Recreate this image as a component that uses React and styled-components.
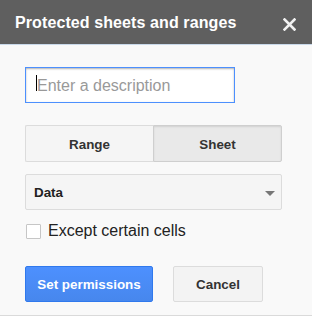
import React from "react";
import styled, { createGlobalStyle } from "styled-components";

const Global = createGlobalStyle`
  html, body { margin: 0; padding: 0; }
  body { background: #f9f9f9; font-family: "Liberation Sans", Arial, sans-serif; }
`;

const Dialog = styled.div`
  width: 312px;
  height: 316px;
  box-sizing: border-box;
  background: #f9f9f9;
  border-bottom: 1px solid #dadada;
  display: flex;
  flex-direction: column;
`;

const Header = styled.div`
  height: 44px;
  background: #5f5f5f;
  border-bottom: 1px solid #c9d9ea;
  display: flex;
  align-items: center;
  justify-content: space-between;
  padding: 0 15px 0 15px;
  color: #fff;
`;

const Title = styled.div`
  font-weight: bold;
  font-size: 16px;
  letter-spacing: 0.1px;
  margin-top: 1px;
`;

const Close = styled.div`
  width: 14px;
  height: 14px;
  display: flex;
  align-items: center;
  justify-content: center;
  margin-top: 5px;
  margin-right: 1px;
`;

const Body = styled.div`
  padding: 22px 30px 0 25px;
  display: flex;
  flex-direction: column;
`;

const InputWrap = styled.div`
  position: relative;
  width: 210px;
  height: 36px;
`;

const Input = styled.input`
  width: 210px;
  height: 36px;
  box-sizing: border-box;
  border: 1px solid #4d90fe;
  box-shadow: inset 0 1px 2px rgba(0, 0, 0, 0.3);
  background: #fff;
  font-family: "Liberation Sans", Arial, sans-serif;
  font-size: 16px;
  padding: 2px 10px 0 11px;
  outline: none;
  caret-color: transparent;
  &::placeholder { color: #999; }
`;

const Caret = styled.span`
  position: absolute;
  left: 11px;
  top: 8px;
  width: 1px;
  height: 16px;
  background: #000;
  pointer-events: none;
`;

const Segmented = styled.div`
  margin-top: 22px;
  display: grid;
  grid-template-columns: 128px 129px;
  width: 257px;
  height: 37px;
`;

const Seg = styled.div`
  box-sizing: border-box;
  display: flex;
  align-items: center;
  justify-content: center;
  font-weight: bold;
  font-size: 13.4px;
  color: #333;
  border: 1px solid ${(p) => (p.$active ? "#cfcfcf" : "#dcdcdc")};
  background: ${(p) => (p.$active ? "#e9e9e9" : "#f5f5f5")};
  box-shadow: ${(p) => (p.$active ? "inset 0 1px 2px rgba(0,0,0,0.1)" : "none")};
  border-radius: ${(p) => (p.$first ? "2px 0 0 2px" : "0 2px 2px 0")};
  ${(p) => (p.$first ? "border-right: none;" : "")}
  padding-top: 1px;
`;

const Select = styled.div`
  margin-top: 12px;
  width: 257px;
  height: 36px;
  box-sizing: border-box;
  border: 1px solid #dcdcdc;
  border-radius: 2px;
  background: #f5f5f5;
  display: flex;
  align-items: center;
  justify-content: space-between;
  padding: 1px 6px 0 8px;
  font-weight: bold;
  font-size: 13.4px;
  color: #222;
`;

const Arrow = styled.div`
  width: 0;
  height: 0;
  border-left: 5px solid transparent;
  border-right: 5px solid transparent;
  border-top: 5px solid #777;
  margin-top: 1px;
`;

const CheckRow = styled.label`
  margin-top: 12px;
  display: flex;
  align-items: center;
  gap: 7px;
  font-size: 16px;
  color: #222;
  padding-left: 1px;
`;

const Box = styled.span`
  width: 15px;
  height: 15px;
  box-sizing: border-box;
  border: 1px solid #c6c6c6;
  background: #fff;
  border-radius: 1px;
`;

const Buttons = styled.div`
  margin-top: 26px;
  display: flex;
  gap: 20px;
`;

const Button = styled.div`
  height: 36px;
  box-sizing: border-box;
  border-radius: 2px;
  display: flex;
  align-items: center;
  justify-content: center;
  font-weight: bold;
  font-size: 13.4px;
  padding-top: 1px;
  width: ${(p) => p.$w}px;
  color: ${(p) => (p.$primary ? "#fff" : "#333")};
  background: ${(p) =>
    p.$primary ? "linear-gradient(#4d90fe, #4787ed)" : "#f3f3f3"};
  border: 1px solid ${(p) => (p.$primary ? "#3079ed" : "#dcdcdc")};
`;

export default function App() {
  return (
    <>
      <Global />
      <Dialog>
        <Header>
          <Title>Protected sheets and ranges</Title>
          <Close>
            <svg width="13" height="13" viewBox="0 0 13 13">
              <path d="M1.5 1.5 L11.5 11.5 M11.5 1.5 L1.5 11.5" stroke="#f2f2f2" strokeWidth="2.6" strokeLinecap="square" />
            </svg>
          </Close>
        </Header>
        <Body>
          <InputWrap>
            <Input placeholder="Enter a description" />
            <Caret />
          </InputWrap>
          <Segmented>
            <Seg $first>Range</Seg>
            <Seg $active>Sheet</Seg>
          </Segmented>
          <Select>
            <span>Data</span>
            <Arrow />
          </Select>
          <CheckRow>
            <Box />
            Except certain cells
          </CheckRow>
          <Buttons>
            <Button $primary $w={128}>Set permissions</Button>
            <Button $w={90}>Cancel</Button>
          </Buttons>
        </Body>
      </Dialog>
    </>
  );
}
